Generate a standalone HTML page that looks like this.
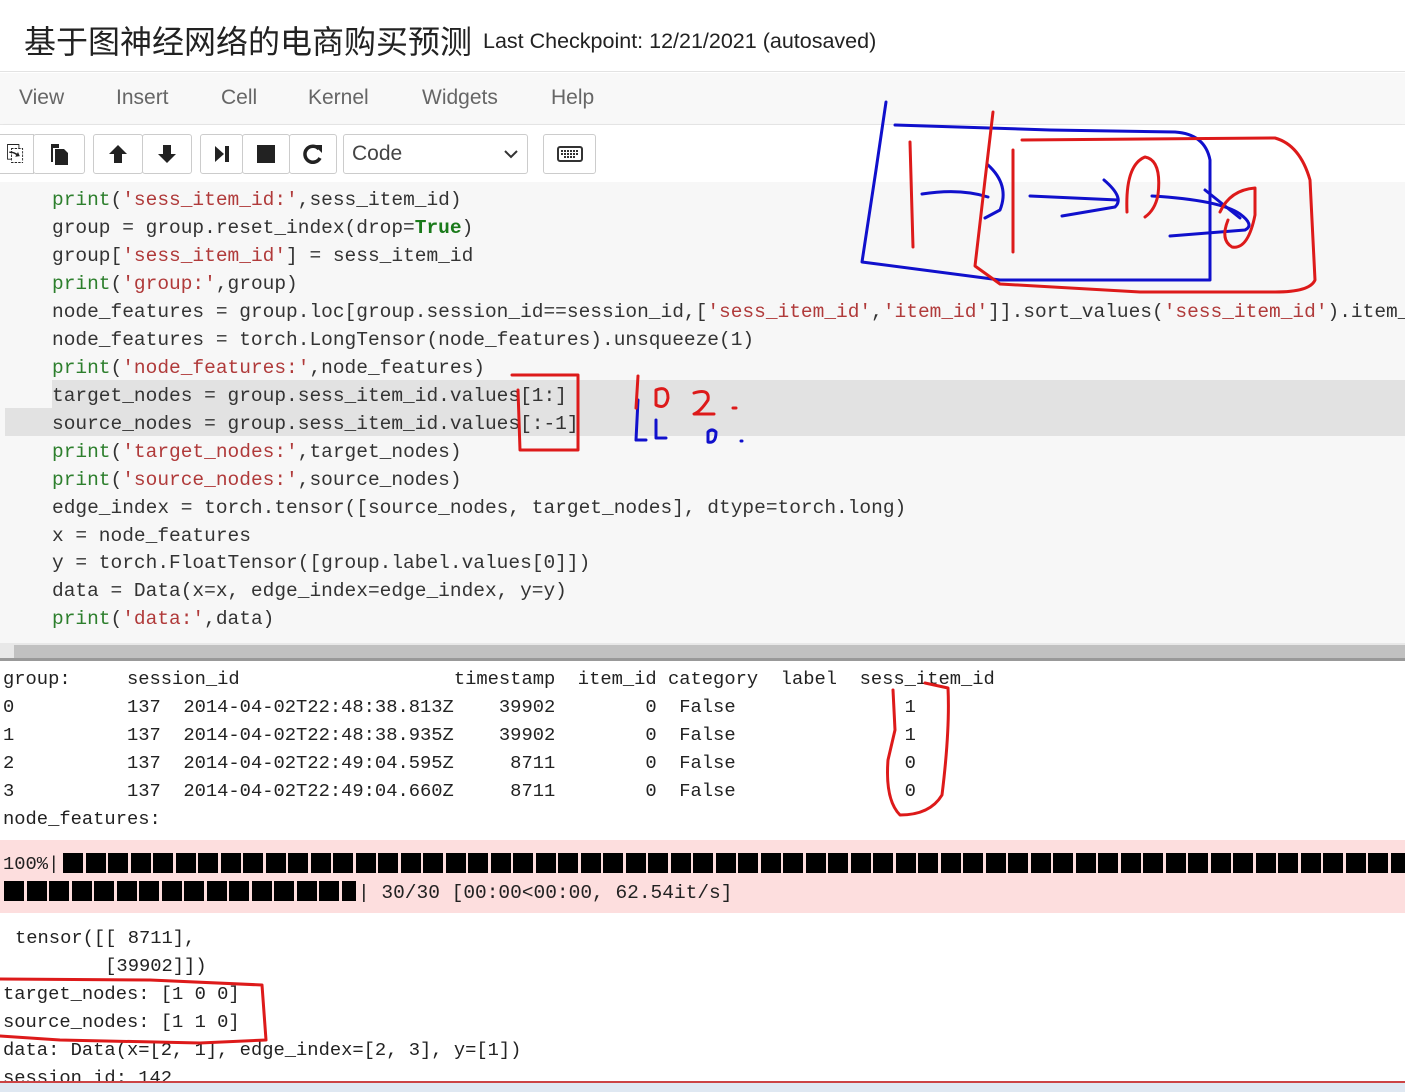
<!DOCTYPE html>
<html><head><meta charset="utf-8">
<style>
*{margin:0;padding:0;box-sizing:border-box}
body{width:1405px;height:1092px;position:relative;overflow:hidden;background:#fff;font-family:"Liberation Sans",sans-serif}
.hdr{position:absolute;left:0;top:0;width:1405px;height:72px;background:#fff;border-bottom:1px solid #e3e3e3}
.title{position:absolute;left:24px;top:17px;font-size:32px;color:#222;font-family:"Liberation Sans","Noto Sans CJK SC",sans-serif;white-space:nowrap}
.ck{position:absolute;left:483px;top:29px;font-size:21.5px;color:#222;white-space:nowrap}
.menu{position:absolute;left:0;top:73px;width:1405px;height:52px;background:#f8f8f8;border-bottom:1px solid #e7e7e7}
.menu span{position:absolute;top:13px;font-size:21px;color:#666}
.tb{position:absolute;left:0;top:125px;width:1405px;height:57px;background:#fff;box-shadow:0 3px 5px rgba(0,0,0,.12)}
.btn{position:absolute;top:9px;height:40px;border:1px solid #ccc;background:#fff;border-radius:3px;display:flex;align-items:center;justify-content:center;font-size:22px;color:#222}
.code{position:absolute;left:0;top:182px;width:1405px;height:462px;background:#f7f7f7}
.ln{position:absolute;white-space:pre;font-family:"Liberation Mono","Noto Sans CJK SC",monospace;font-size:19.5px;color:#333;line-height:28px}
.out{color:#222;font-size:18.8px}
.g{color:#2d7f2d}.s{color:#b03a3a}.b{color:#1a7a1a;font-weight:bold}
.hl{position:absolute;height:28px;background:#e2e2e2}
.sb{position:absolute;left:0;top:643px;width:1405px;height:18px;background:#e8e8e8;border-bottom:3px solid #999}
.pink{position:absolute;left:0;top:840px;width:1405px;height:73px;background:#fddede}
.blk{display:inline-block;width:20px;height:20px;background:#000;margin-right:2.5px;vertical-align:middle}
</style></head><body>
<div class="hdr">
<div class="title">基于图神经网络的电商购买预测</div>
<div class="ck">Last Checkpoint: 12/21/2021 (autosaved)</div>
</div>
<div class="menu">
<span style="left:19px">View</span><span style="left:116px">Insert</span><span style="left:221px">Cell</span><span style="left:308px">Kernel</span><span style="left:422px">Widgets</span><span style="left:551px">Help</span>
</div>
<div class="tb">
<div class="btn" style="left:-4px;width:38px;border-radius:0 0 0 0">⎘</div>
<div class="btn" style="left:33px;width:52px">
<svg width="22" height="24" viewBox="0 0 22 24"><path d="M3 2h8v4h-6v14H3z" fill="#222"/><path d="M7 7h9l4 4v12H7z" fill="#222"/></svg></div>
<div class="btn" style="left:93px;width:50px"><svg width="22" height="22" viewBox="0 0 22 22"><path d="M11 2L2 11h5v9h8v-9h5z" fill="#222"/></svg></div>
<div class="btn" style="left:142px;width:50px"><svg width="22" height="22" viewBox="0 0 22 22"><path d="M11 20L2 11h5V2h8v9h5z" fill="#222"/></svg></div>
<div class="btn" style="left:200px;width:43px"><svg width="18" height="20" viewBox="0 0 18 20"><path d="M2 2l9 8-9 8z" fill="#222"/><rect x="12" y="2" width="4" height="16" fill="#222"/></svg></div>
<div class="btn" style="left:242px;width:48px"><div style="width:18px;height:18px;background:#222"></div></div>
<div class="btn" style="left:289px;width:48px"><svg width="22" height="22" viewBox="0 0 22 22"><path d="M17 6A8 8 0 1 0 18 15" fill="none" stroke="#222" stroke-width="3.5"/><path d="M12 2h8v8z" fill="#222"/></svg></div>
<div class="btn" style="left:343px;width:185px;justify-content:flex-start;padding-left:8px;font-size:21px;color:#444">Code<svg style="position:absolute;right:8px;top:13px" width="16" height="12" viewBox="0 0 16 12"><path d="M2 3l6 6 6-6" fill="none" stroke="#333" stroke-width="2"/></svg></div>
<div class="btn" style="left:543px;width:53px"><svg width="26" height="16" viewBox="0 0 26 16"><rect x="1" y="1" width="24" height="14" rx="2" fill="none" stroke="#333" stroke-width="2"/><path d="M4 5h18M4 8h18M7 11h12" stroke="#333" stroke-width="2" stroke-dasharray="2 1"/></svg></div>
</div>
<div class="code">
<div class="hl" style="left:52px;top:198px;width:1353px"></div>
<div class="hl" style="left:5px;top:226px;width:1400px"></div>
</div>
<div class="ln" style="left:52px;top:186px"><span class="g">print</span>(<span class="s">'sess_item_id:'</span>,sess_item_id)</div>
<div class="ln" style="left:52px;top:214px">group = group.reset_index(drop=<span class="b">True</span>)</div>
<div class="ln" style="left:52px;top:242px">group[<span class="s">'sess_item_id'</span>] = sess_item_id</div>
<div class="ln" style="left:52px;top:270px"><span class="g">print</span>(<span class="s">'group:'</span>,group)</div>
<div class="ln" style="left:52px;top:298px">node_features = group.loc[group.session_id==session_id,[<span class="s">'sess_item_id'</span>,<span class="s">'item_id'</span>]].sort_values(<span class="s">'sess_item_id'</span>).item_</div>
<div class="ln" style="left:52px;top:326px">node_features = torch.LongTensor(node_features).unsqueeze(1)</div>
<div class="ln" style="left:52px;top:354px"><span class="g">print</span>(<span class="s">'node_features:'</span>,node_features)</div>
<div class="ln" style="left:52px;top:382px">target_nodes = group.sess_item_id.values[1:]</div>
<div class="ln" style="left:52px;top:410px">source_nodes = group.sess_item_id.values[:-1]</div>
<div class="ln" style="left:52px;top:438px"><span class="g">print</span>(<span class="s">'target_nodes:'</span>,target_nodes)</div>
<div class="ln" style="left:52px;top:466px"><span class="g">print</span>(<span class="s">'source_nodes:'</span>,source_nodes)</div>
<div class="ln" style="left:52px;top:494px">edge_index = torch.tensor([source_nodes, target_nodes], dtype=torch.long)</div>
<div class="ln" style="left:52px;top:522px">x = node_features</div>
<div class="ln" style="left:52px;top:549px">y = torch.FloatTensor([group.label.values[0]])</div>
<div class="ln" style="left:52px;top:577px">data = Data(x=x, edge_index=edge_index, y=y)</div>
<div class="ln" style="left:52px;top:605px"><span class="g">print</span>(<span class="s">'data:'</span>,data)</div>
<div class="sb"><div style="position:absolute;left:14px;top:2px;width:1391px;height:13px;background:#c1c1c1"></div></div>

<div class="ln out" style="left:3px;top:665px">group:     session_id                   timestamp  item_id category  label  sess_item_id</div>
<div class="ln out" style="left:3px;top:693px">0          137  2014-04-02T22:48:38.813Z    39902        0  False               1</div>
<div class="ln out" style="left:3px;top:721px">1          137  2014-04-02T22:48:38.935Z    39902        0  False               1</div>
<div class="ln out" style="left:3px;top:749px">2          137  2014-04-02T22:49:04.595Z     8711        0  False               0</div>
<div class="ln out" style="left:3px;top:777px">3          137  2014-04-02T22:49:04.660Z     8711        0  False               0</div>
<div class="ln out" style="left:3px;top:805px">node_features:</div>
<div class="pink">
<div class="ln out" style="left:3px;top:10px">100%|</div>
<div style="position:absolute;left:63px;top:13px;width:1342px;height:22px;overflow:hidden;white-space:nowrap;font-size:0"><span class="blk"></span><span class="blk"></span><span class="blk"></span><span class="blk"></span><span class="blk"></span><span class="blk"></span><span class="blk"></span><span class="blk"></span><span class="blk"></span><span class="blk"></span><span class="blk"></span><span class="blk"></span><span class="blk"></span><span class="blk"></span><span class="blk"></span><span class="blk"></span><span class="blk"></span><span class="blk"></span><span class="blk"></span><span class="blk"></span><span class="blk"></span><span class="blk"></span><span class="blk"></span><span class="blk"></span><span class="blk"></span><span class="blk"></span><span class="blk"></span><span class="blk"></span><span class="blk"></span><span class="blk"></span><span class="blk"></span><span class="blk"></span><span class="blk"></span><span class="blk"></span><span class="blk"></span><span class="blk"></span><span class="blk"></span><span class="blk"></span><span class="blk"></span><span class="blk"></span><span class="blk"></span><span class="blk"></span><span class="blk"></span><span class="blk"></span><span class="blk"></span><span class="blk"></span><span class="blk"></span><span class="blk"></span><span class="blk"></span><span class="blk"></span><span class="blk"></span><span class="blk"></span><span class="blk"></span><span class="blk"></span><span class="blk"></span><span class="blk"></span><span class="blk"></span><span class="blk"></span><span class="blk"></span><span class="blk"></span></div>
<div style="position:absolute;left:4px;top:41px;width:352px;height:22px;overflow:hidden;white-space:nowrap;font-size:0"><span class="blk"></span><span class="blk"></span><span class="blk"></span><span class="blk"></span><span class="blk"></span><span class="blk"></span><span class="blk"></span><span class="blk"></span><span class="blk"></span><span class="blk"></span><span class="blk"></span><span class="blk"></span><span class="blk"></span><span class="blk"></span><span class="blk"></span><span class="blk"></span></div>
<div class="ln out" style="left:358px;top:39px;font-size:19.5px">| 30/30 [00:00&lt;00:00, 62.54it/s]</div>
</div>
<div class="ln out" style="left:15px;top:924px">tensor([[ 8711],</div>
<div class="ln out" style="left:15px;top:952px">        [39902]])</div>
<div class="ln out" style="left:3px;top:980px">target_nodes: [1 0 0]</div>
<div class="ln out" style="left:3px;top:1008px">source_nodes: [1 1 0]</div>
<div class="ln out" style="left:3px;top:1036px">data: Data(x=[2, 1], edge_index=[2, 3], y=[1])</div>
<div class="ln out" style="left:3px;top:1064px">session_id: 142</div>
<div style="position:absolute;left:0;top:1081px;width:1405px;height:11px;background:#dfe8f2;border-top:2px solid #c44"></div>

<svg style="position:absolute;left:0;top:0" width="1405" height="1092" fill="none" stroke-linecap="round" stroke-linejoin="round">
<g stroke="#1010cc" stroke-width="3">
<path d="M886 102 L876 170 L862 262 L1000 280 L1210 280 L1210 160 Q1205 134 1175 132 L1050 130 L895 125"/>
<path d="M922 194 Q960 188 988 197"/>
<path d="M988 165 Q1010 185 1000 210 L985 218"/>
<path d="M1030 196 L1118 200"/>
<path d="M1104 180 Q1125 198 1115 207 L1062 216"/>
<path d="M1152 196 Q1220 200 1240 214 Q1255 225 1245 230 L1170 236"/>
<path d="M1205 190 L1240 218"/>
<path d="M638 400 L636 440 L646 440"/><path d="M656 420 L656 438 L666 438"/>
<path d="M708 432 Q712 428 716 432 Q716 444 708 442 Z"/><path d="M741 441 L742 441"/>
</g>
<g stroke="#dd1a1a" stroke-width="3">
<path d="M1022 140 L1275 138 Q1300 145 1310 180 L1315 280 Q1310 292 1275 292 L1140 292 L1000 284 L975 266 L985 180 L993 112"/>
<path d="M910 142 L913 247"/><path d="M1013 150 L1013 252"/>
<path d="M1127 212 Q1125 165 1145 157 Q1162 160 1158 195 Q1155 210 1145 217"/>
<path d="M1220 212 Q1230 190 1255 188 L1255 215 Q1248 250 1232 247 Q1220 240 1228 220"/>
<path d="M512 375 L578 375 L578 450 L520 450 L518 390"/>
<path d="M638 376 L636 408"/><path d="M656 390 Q668 385 668 398 Q666 410 656 405 Z"/>
<path d="M694 393 Q710 388 708 400 Q700 412 694 414 L714 414"/><path d="M733 408 L736 408"/>
<path d="M925 683 L948 688 Q950 730 942 795 Q930 815 900 815 Q885 800 888 760 L895 730 L893 690"/>
<path d="M0 979 L150 980 L262 985 L266 1040 L200 1043 L60 1040 L0 1036"/>
</g>
</svg>
</body></html>
